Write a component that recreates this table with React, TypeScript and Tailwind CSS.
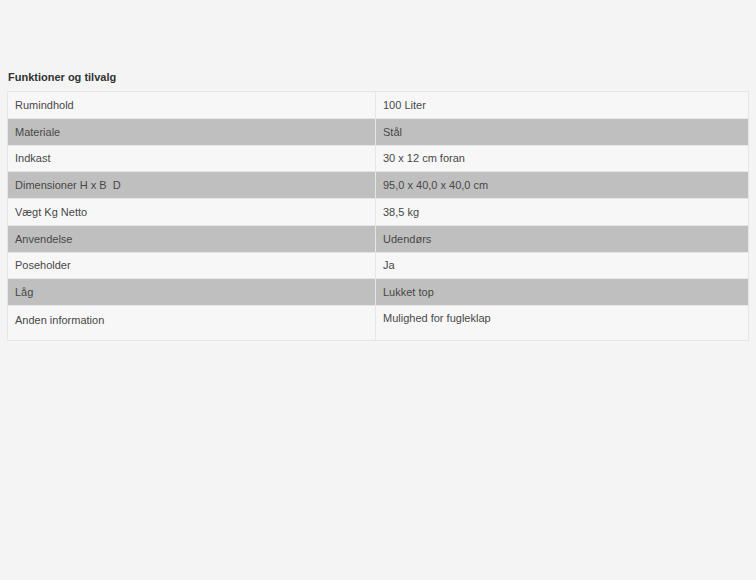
import React from 'react';

const rows: [string, string][] = [
    ['Rumindhold', '100 Liter'],
    ['Materiale', 'Stål'],
    ['Indkast', '30 x 12 cm foran'],
    ['Dimensioner H x B  D', '95,0 x 40,0 x 40,0 cm'],
    ['Vægt Kg Netto', '38,5 kg'],
    ['Anvendelse', 'Udendørs'],
    ['Poseholder', 'Ja'],
    ['Låg', 'Lukket top'],
];

const App = () => {
    return (
        <div className="min-h-[580px] w-full bg-[#f4f4f4] font-['Liberation_Sans',Arial,sans-serif] text-[11px] text-[#484848]">
            <div className="pl-[7px] pr-[7px] pt-[70px]">
                <h2 className="pl-px text-[11px] font-bold leading-[14px] text-[#333]">Funktioner og tilvalg</h2>
                <table className="mt-[7px] w-[742px] table-fixed border-collapse border border-[#e6e6e6]">
                    <tbody>
                        {rows.map(([label, value], i) => (
                            <tr key={label} className={i % 2 === 1 ? 'bg-[#bfbfbf]' : 'bg-[#f7f7f7]'}>
                                <td className="h-[26.75px] w-[368px] border-r border-b border-[#e6e6e6] px-[7px] align-middle leading-[14px] whitespace-pre">{label}</td>
                                <td className="h-[26.75px] border-b border-[#e6e6e6] px-[7px] align-middle leading-[14px]">{value}</td>
                            </tr>
                        ))}
                        <tr className="bg-[#f7f7f7]">
                            <td className="h-[35px] w-[368px] border-r border-[#e6e6e6] px-[7px] pt-[7px] align-top leading-[14px]">Anden information</td>
                            <td className="h-[35px] px-[7px] pt-[5px] align-top leading-[14px]">Mulighed for fugleklap</td>
                        </tr>
                    </tbody>
                </table>
            </div>
        </div>
    );
};

export default App;
